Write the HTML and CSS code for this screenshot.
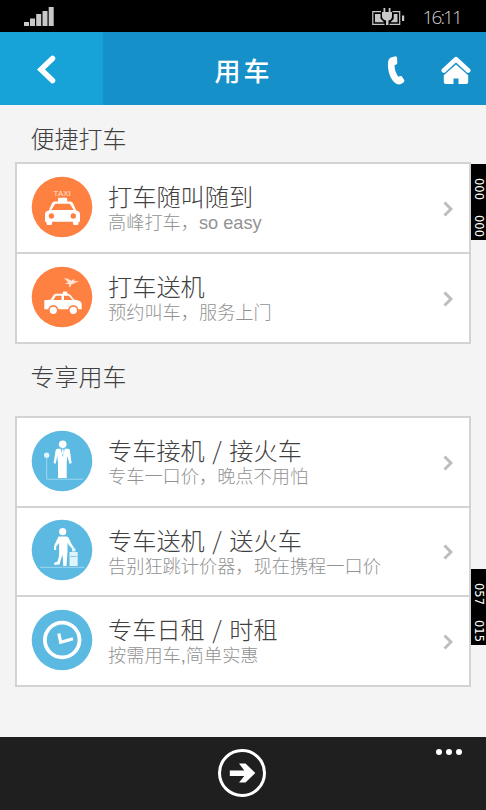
FILE: index.html
```html
<!DOCTYPE html>
<html lang="zh-CN">
<head>
    <meta charset="UTF-8">
    <meta name="viewport" content="width=device-width, initial-scale=1.0">
    <title>用车</title>
    <link rel="stylesheet" href="styles.css">
</head>
<body>
    <div class="status-bar">
        <svg class="signal" width="30" height="20" viewBox="0 0 30 20">
            <path d="M0 15h5v4H0zM6 11.500h5V19H6zM12.200 7h5v12h-5zM18.500 4h5v15h-5zM24.700 0h5v19h-5z"/>
        </svg>
        <svg class="battery" width="33" height="18" viewBox="0 0 33 18">
            <path d="M9 3.700H.8v12.600h11.700M20.500 3.700h7.200v12.600H17.500" fill="none" stroke="#c8c8c8" stroke-width="1.200"/>
            <path d="M3 6h5.500v4.500l3.500 3.700H3zM25.500 6h-3.800v5l-3.200 3.200h7zM30 7.500h2.200v5.500H30zM10 4h10v4c0 3-1.500 4-3.500 4.500v4.500h-2.500v-4.500c-2-.5-4-1.500-4-4.500zM11.500 0h1.800v4h-1.800zM16.700 0h1.800v4h-1.800z"/>
        </svg>
        <span class="clock">16:11</span>
    </div>
    <div class="header">
        <a class="back">
            <svg width="20" height="30" viewBox="0 0 20 30"><path d="M15.500 3.500L4 14.500l11.500 11" fill="none" stroke="#fff" stroke-width="5.500" stroke-linecap="round"/></svg>
        </a>
        <h1>用车</h1>
        <div class="actions">
            <svg width="18" height="30" viewBox="0 0 18 30"><path d="M4 1.500L8.500 .3c1 0 1.500.8 1.600 1.700l.2 5c0 1-.8 1.600-2.800 2.200 0 4 1.500 8.500 3.800 11.500 1.500-.7 2.700-1 3.400-.4l2.500 3.600c.6 1-.2 2.200-1.500 3.200-2.300 1.800-5.500 1.800-8.200-.6C3 22.500.5 14 1 7c.2-3 1-4.700 3-5.500z" fill="#fff"/></svg>
            <svg width="30" height="30" viewBox="0 0 30 30">
                <path d="M2.800 14.500L15 3.200l12.200 11.300" fill="none" stroke="#fff" stroke-width="4.600" stroke-linecap="round" stroke-linejoin="round"/>
                <path d="M15 8.500l12.200 10.800V26q0 2-2 2h-7.700v-5.500h-5V28H4.800q-2 0-2-2v-6.700z" fill="#fff"/>
            </svg>
        </div>
    </div>
    <div class="content">
        <h2>便捷打车</h2>
        <div class="card">
            <div class="row">
                <svg class="icon orange" viewBox="0 0 60 60">
                    <circle cx="30" cy="30" r="30.300"/>
                    <text x="30.200" y="18.600" text-anchor="middle">TAXI</text>
                    <path d="M26 24.500v-3q0-.8.800-.8h7.600q.8 0 .8.800v3h3q2 0 2.800 1.800l3.200 7.200q3.800.7 3.800 4v7.200h-1.500v1.800q0 1.500-1.500 1.500h-2.500q-1.500 0-1.500-1.500v-1.800H20v1.800q0 1.500-1.500 1.500H16q-1.500 0-1.500-1.500v-1.800H13v-7.200q0-3.300 3.800-4l3.200-7.200q.8-1.800 2.800-1.800z" fill="#fff"/>
                    <path d="M23.300 26.800h14.400l4 6.200H19.300z"/>
                    <circle cx="19.400" cy="39" r="2.700"/>
                    <circle cx="41.300" cy="39" r="2.700"/>
                </svg>
                <div class="text">
                    <h3>打车随叫随到</h3>
                    <p>高峰打车，so easy</p>
                </div>
                <svg class="arrow" viewBox="0 0 10 16"><path d="M1.500 1.500L8 8l-6.500 6.500"/></svg>
            </div>
            <div class="row">
                <svg class="icon orange" viewBox="0 0 60 60">
                    <circle cx="30" cy="30" r="30.300"/>
                    <path d="M12.300 34q0-1 1-1l5.200-.3 3.200-4.700q.8-1.300 2.300-1.300h6.500l.7-2.200h3.500l1 2.200q1.800 0 3 1.500l3.300 4.300 5.200 1.200q2.500.8 2.500 3.300v5.300H12.300z" fill="#fff"/>
                    <path d="M24 28.800h5.500V33h-8.300zM32 28.800h4.800l3.700 4.200H32z"/>
                    <circle cx="21.300" cy="43.300" r="5.200"/>
                    <circle cx="41.300" cy="43.300" r="5.200"/>
                    <circle cx="21.300" cy="43.300" r="3.600" fill="#fff"/>
                    <circle cx="41.300" cy="43.300" r="3.600" fill="#fff"/>
                    <path d="M32 11.200l3.500.3 3.800 2.200 2.700-1.700.5 2.200 4.500-.2-5 2.600-2.700 1-1 2.500-1.300-.3.200-2.500-4.200-.8 3.300-1.300z" fill="#ffe3d5"/>
                </svg>
                <div class="text">
                    <h3>打车送机</h3>
                    <p>预约叫车，服务上门</p>
                </div>
                <svg class="arrow" viewBox="0 0 10 16"><path d="M1.500 1.500L8 8l-6.500 6.500"/></svg>
            </div>
        </div>
        <h2 class="second">专享用车</h2>
        <div class="card">
            <div class="row">
                <svg class="icon blue" viewBox="0 0 60 60">
                    <circle cx="30" cy="30" r="30.300"/>
                    <path d="M14.700 25v23.200H51" fill="none" stroke="#a5dbf1" stroke-width=".9"/>
                    <circle cx="14.700" cy="24.300" r="2.700" fill="#dff3fb"/>
                    <circle cx="30.700" cy="13.300" r="3.800" fill="#fff"/>
                    <path d="M25.500 17.800h10.500q1.500.2 1.900 1.700l1.700 12.500-2 .9-2.300-7.900-.6 8V47h-8.700V33l-.6-8-1.800 7.800-2-.8 2-12.500q.4-1.500 1.900-1.700z" fill="#fff"/>
                    <path d="M28.500 17.800h4.300l-2.100 8.200z"/>
                    <path d="M30 18.300h1.400l.5 3.700-1.200 2-1.200-2z" fill="#fff"/>
                </svg>
                <div class="text">
                    <h3>专车接机<span class="slash">/</span>接火车</h3>
                    <p>专车一口价，晚点不用怕</p>
                </div>
                <svg class="arrow" viewBox="0 0 10 16"><path d="M1.500 1.500L8 8l-6.500 6.500"/></svg>
            </div>
            <div class="row">
                <svg class="icon blue" viewBox="0 0 60 60">
                    <circle cx="30" cy="30" r="30.300"/>
                    <path d="M8 47.300h44" fill="none" stroke="#a5dbf1" stroke-width=".9"/>
                    <circle cx="30.700" cy="11.700" r="3.600" fill="#fff"/>
                    <path d="M26.500 16.500h8q1.700.2 2.500 2l2 4.500 3.500 5.500-1.500 1.300-4.200-4.800-1.300-2.500v8.300l-1 15.200h-3.200l-.8-11.500-1.500 4.500-1.500 5.500-5 .5-.6-2 3.600-1.500 1.500-5.200.2-13.300-3 3.500v3.500h-2.200l.3-4.700z" fill="#fff"/>
                    <path d="M37.500 32h8.200v14h-8.200zM40 31.500v-3h3.500v3" fill="#dff3fb"/>
                    <path d="M38.300 36.500h6.500" stroke="#5cb9e1" stroke-width=".7"/>
                </svg>
                <div class="text">
                    <h3>专车送机<span class="slash">/</span>送火车</h3>
                    <p>告别狂跳计价器，现在携程一口价</p>
                </div>
                <svg class="arrow" viewBox="0 0 10 16"><path d="M1.500 1.500L8 8l-6.500 6.500"/></svg>
            </div>
            <div class="row">
                <svg class="icon blue" viewBox="0 0 60 60">
                    <circle cx="30" cy="30" r="30.300"/>
                    <circle cx="30.200" cy="30" r="17.300" fill="none" stroke="#fff" stroke-width="3.800"/>
                    <path d="M26.800 23.500l1.900 8.800L41 28.700" fill="none" stroke="#fff" stroke-width="3.200"/>
                </svg>
                <div class="text">
                    <h3>专车日租<span class="slash">/</span>时租</h3>
                    <p>按需用车,简单实惠</p>
                </div>
                <svg class="arrow" viewBox="0 0 10 16"><path d="M1.500 1.500L8 8l-6.500 6.500"/></svg>
            </div>
        </div>
    </div>
    <div class="app-bar">
        <svg class="go" width="50" height="50" viewBox="0 0 50 50">
            <circle cx="25" cy="25" r="22.500" fill="none" stroke="#fff" stroke-width="3"/>
            <path d="M12.800 22.400h14.500l-5.300-7h6.500l9.800 9.600-9.800 9.600H22l5.300-6.700H12.800z" fill="#fff"/>
        </svg>
        <div class="more"><i></i><i></i><i></i></div>
    </div>
    <div class="counter top"><span>000</span><span>000</span></div>
    <div class="counter bottom"><span>057</span><span>015</span></div>
</body>
</html>
```

FILE: styles.css
```css
body {
    margin: 0;
    width: 486px;
    height: 810px;
    display: flex;
    flex-direction: column;
    position: relative;
    overflow: hidden;
    background: #f4f4f4;
    font-family: "Liberation Sans", "Noto Sans CJK SC", sans-serif;
    color: #404040;
}
h1, h2, h3, p {
    margin: 0;
    font-weight: 300;
}
svg {
    display: block;
    flex: none;
}
.status-bar {
    height: 32px;
    box-sizing: border-box;
    padding: 0 25px 0 24px;
    display: flex;
    align-items: flex-start;
    background: #000;
    fill: #c8c8c8;
}
.signal {
    margin-top: 7px;
}
.battery {
    margin: 8px 18px 0 auto;
}
.clock {
    font: 300 19px/34px "Open Sans", sans-serif;
    letter-spacing: -1.9px;
    color: #d0d0d0;
}
.header {
    height: 73px;
    display: grid;
    grid-template-columns: 103px 1fr 103px;
    align-items: center;
    background: #1690c8;
}
.back {
    height: 73px;
    display: flex;
    align-items: center;
    padding: 2px 0 0 37px;
    box-sizing: border-box;
    background: #18a3d8;
}
.header h1 {
    font-size: 26px;
    font-weight: 500;
    letter-spacing: 3px;
    padding: 2px 0 0 1px;
    text-align: center;
    color: #fff;
}
.actions {
    display: flex;
    gap: 36px;
    padding: 4px 0 0 4px;
}
.content {
    flex: 1;
    padding: 0 15px;
}
h2 {
    font-size: 24px;
    line-height: 36px;
    padding: 17px 0 4px 15.5px;
}
h2.second {
    padding: 16px 0 20px 15.5px;
}
.card {
    border: 2px solid #d3d3d3;
    background: #fff;
}
.row {
    height: 88px;
    display: flex;
    align-items: center;
    padding: 0 16px 0 15px;
}
.row + .row {
    border-top: 2px solid #d3d3d3;
    height: 87.6px;
}
.icon {
    width: 60px;
    height: 60px;
    overflow: visible;
    margin-top: -2px;
}
.orange {
    fill: #ff8142;
}
.orange text {
    font-size: 8px;
    fill: #ffe3d5;
}
.blue {
    fill: #5cb9e1;
}
.text {
    flex: 1;
    padding: 4px 0 0 16px;
    white-space: nowrap;
}
h3 {
    font-size: 24.2px;
    line-height: 26px;
}
.slash {
    display: inline-block;
    width: 24.6px;
    text-align: center;
    font-family: "Noto Sans CJK SC", sans-serif;
    line-height: 1;
}
.text p {
    font-size: 18.2px;
    line-height: 24px;
    color: #929292;
}
.arrow {
    width: 10px;
    height: 16px;
    margin-top: 2px;
    fill: none;
    stroke: #bdbdbd;
    stroke-width: 3;
}
.app-bar {
    height: 73px;
    display: grid;
    grid-template-columns: 1fr 50px 1fr;
    background: #1f1f1f;
}
.go {
    grid-column: 2;
    margin: 11px 0 0 -1px;
}
.more {
    display: flex;
    gap: 4px;
    justify-content: flex-end;
    padding: 12px 24px 0 0;
}
.more i {
    width: 6px;
    height: 6px;
    border-radius: 50%;
    background: #fff;
}
/* frame rate counters over the right edge */
.counter {
    position: absolute;
    right: 0;
    width: 15px;
    height: 76px;
    box-sizing: border-box;
    padding-top: 14px;
    display: flex;
    gap: 15px;
    writing-mode: vertical-rl;
    background: #000;
    color: #fff;
    font: 11.500px/15px "DejaVu Sans", sans-serif;
}
.counter.top {
    top: 164px;
}
.counter.bottom {
    top: 569px;
}
```
